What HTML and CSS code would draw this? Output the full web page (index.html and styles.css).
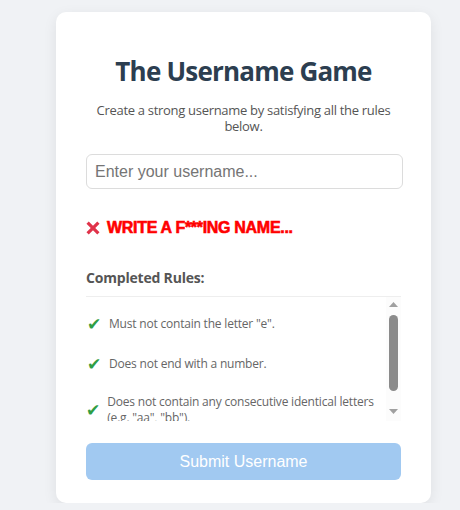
FILE: index.html
```html
<!DOCTYPE html>
<html lang="en">
<head>
<meta charset="utf-8">
<title>The Username Game</title>
<link rel="stylesheet" href="styles.css">
</head>
<body>
<main class="page">
  <section class="card">
    <h1 class="title">The Username Game</h1>
    <p class="subtitle">Create a strong username by satisfying all the rules below.</p>
    <input class="username" type="text" placeholder="Enter your username...">
    <div class="status">
      <svg class="status-icon" viewBox="0 0 14 14" width="14" height="14" aria-hidden="true">
        <path d="M1.6 1.6 L12.4 12.4 M12.4 1.6 L1.6 12.4" stroke="#e0334a" stroke-width="3.2" fill="none"/>
      </svg>
      <span class="status-text">WRITE A F***ING NAME...</span>
    </div>
    <h3 class="rules-title">Completed Rules:</h3>
    <div class="rules-box">
      <ul class="rule-list">
        <li class="rule"><span class="check">✔</span><span class="rule-text">Must not contain the letter "e".</span></li>
        <li class="rule"><span class="check">✔</span><span class="rule-text">Does not end with a number.</span></li>
        <li class="rule"><span class="check">✔</span><span class="rule-text">Does not contain any consecutive identical letters (e.g. "aa", "bb").</span></li>
      </ul>
      <div class="scrollbar" aria-hidden="true">
        <div class="scroll-arrow">
          <svg viewBox="0 0 9 5" width="9" height="5"><path d="M0 5 L4.5 0 L9 5 Z" fill="#a0a0a0"/></svg>
        </div>
        <div class="scroll-thumb"></div>
        <div class="scroll-spacer"></div>
        <div class="scroll-arrow">
          <svg viewBox="0 0 9 5" width="9" height="5"><path d="M0 0 L4.5 5 L9 0 Z" fill="#a0a0a0"/></svg>
        </div>
      </div>
    </div>
    <button class="submit" type="button" disabled>Submit Username</button>
  </section>
</main>
</body>
</html>
```
FILE: styles.css
```css
html, body {
  margin: 0;
  padding: 0;
}

body {
  background: #f0f2f5;
  font-family: "Open Sans", "Noto Sans", sans-serif;
}

.page {
  display: flex;
  padding: 12px 0 0 56px;
}

.card {
  width: 375px;
  box-sizing: border-box;
  padding: 0 30px 23px;
  background: #ffffff;
  border-radius: 10px;
  box-shadow: 0 4px 14px rgba(0, 0, 0, 0.08);
  display: flex;
  flex-direction: column;
}

.title {
  margin: 43px 0 0;
  font-size: 26px;
  line-height: 32px;
  font-weight: 700;
  letter-spacing: -0.8px;
  color: #2c3e50;
  text-align: center;
}

.subtitle {
  margin: 15px 0 0;
  font-size: 13px;
  line-height: 16px;
  letter-spacing: -0.3px;
  color: #555;
  text-align: center;
}

.username {
  margin: 20px 0 0;
  width: 317px;
  height: 35px;
  box-sizing: border-box;
  padding: 0 8px;
  border: 1px solid #dcdcdc;
  border-radius: 6px;
  font-family: "Liberation Sans", Arial, sans-serif;
  font-size: 16px;
  color: #333;
  outline: none;
}

.username::placeholder {
  color: #757575;
}

.status {
  margin-top: 29px;
  height: 20px;
  display: flex;
  align-items: center;
  gap: 7px;
}

.status-icon {
  flex: none;
}

.status-text {
  font-family: "Liberation Sans", Arial, sans-serif;
  font-weight: 700;
  font-size: 16px;
  letter-spacing: -0.3px;
  color: #ff0000;
  -webkit-text-stroke: 0.6px #ff0000;
}

.rules-title {
  margin: 30px 0 0;
  padding-bottom: 8px;
  font-size: 14px;
  line-height: 20px;
  font-weight: 700;
  letter-spacing: -0.2px;
  color: #555;
  border-bottom: 1px solid #eeeeee;
}

.rules-box {
  display: flex;
  height: 124px;
}

.rule-list {
  flex: 1;
  min-width: 0;
  list-style: none;
  margin: 0;
  padding: 7px 0 0;
  overflow: hidden;
}

.rule {
  display: flex;
  align-items: center;
  gap: 7px;
  padding: 10px 0;
}

.check {
  width: 16px;
  height: 20px;
  line-height: 20px;
  text-align: center;
  font-family: "DejaVu Sans", sans-serif;
  font-size: 17px;
  color: #2f9e44;
  white-space: nowrap;
}

.rule-text {
  font-size: 12px;
  line-height: 16px;
  letter-spacing: -0.2px;
  color: #666;
}

.scrollbar {
  flex: none;
  width: 15px;
  display: flex;
  flex-direction: column;
  align-items: center;
  padding-bottom: 3px;
  box-sizing: border-box;
  background: #fcfcfc;
}

.scroll-arrow {
  height: 14px;
  display: flex;
  align-items: center;
  justify-content: center;
}

.scroll-thumb {
  margin-top: 4px;
  width: 9px;
  height: 76px;
  border-radius: 5px;
  background: #8b8b8b;
}

.scroll-spacer {
  flex: 1;
}

.submit {
  margin-top: 22px;
  width: 315px;
  height: 37px;
  border: none;
  border-radius: 6px;
  background: #a1c9f1;
  color: #ffffff;
  font-family: "Liberation Sans", Arial, sans-serif;
  font-size: 16px;
  cursor: not-allowed;
}
```
